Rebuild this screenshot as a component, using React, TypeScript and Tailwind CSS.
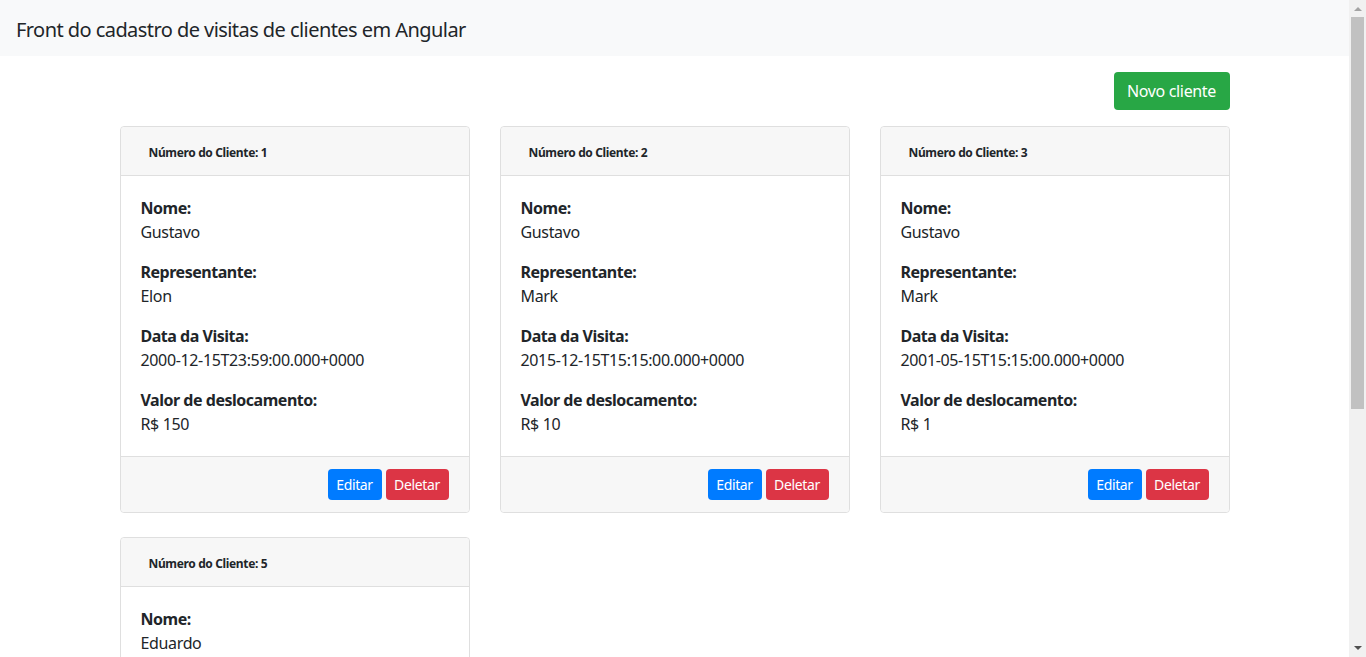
import React from 'react';

type Cliente = {
  id: number;
  nome: string;
  representante: string;
  data: string;
  valor: string;
};

const clientes: Cliente[] = [
  { id: 1, nome: 'Gustavo', representante: 'Elon', data: '2000-12-15T23:59:00.000+0000', valor: '150' },
  { id: 2, nome: 'Gustavo', representante: 'Mark', data: '2015-12-15T15:15:00.000+0000', valor: '10' },
  { id: 3, nome: 'Gustavo', representante: 'Mark', data: '2001-05-15T15:15:00.000+0000', valor: '1' },
  { id: 5, nome: 'Eduardo', representante: 'Elon', data: '2010-01-10T10:00:00.000+0000', valor: '50' },
];

const Field = ({ label, value }: { label: string; value: string }) => (
  <div>
    <div className="font-bold leading-6 tracking-[-0.03em]">{label}</div>
    <div className="leading-6">{value}</div>
  </div>
);

const ClienteCard = ({ c }: { c: Cliente }) => (
  <div className="w-[350px] rounded border border-[#dfdfdf] bg-white">
    <div className="h-[49px] flex items-center pt-[3px] px-7 bg-[#f7f7f7] border-b border-[#dfdfdf] rounded-t">
      <span className="text-[12px] font-bold text-[#212529] tracking-[-0.03em]">Número do Cliente: {c.id}</span>
    </div>
    <div className="p-5 flex flex-col gap-4">
      <Field label="Nome:" value={c.nome} />
      <Field label="Representante:" value={c.representante} />
      <Field label="Data da Visita:" value={c.data} />
      <Field label="Valor de deslocamento:" value={`R$ ${c.valor}`} />
    </div>
    <div className="h-[56px] flex items-center justify-end gap-1 px-5 bg-[#f7f7f7] border-t border-[#dfdfdf] rounded-b">
      <button className="h-[31px] w-[54px] rounded bg-[#007bff] text-white text-sm">Editar</button>
      <button className="h-[31px] w-[63px] rounded bg-[#dc3545] text-white text-sm">Deletar</button>
    </div>
  </div>
);

const Scrollbar = () => (
  <div className="w-[17px] h-full bg-[#f1f1f1] flex flex-col items-center shrink-0">
    <div className="h-[17px] flex items-center justify-center">
      <svg width="8" height="5" viewBox="0 0 8 5"><path d="M0 5 L4 1 L8 5 Z" fill="#a3a3a3" /></svg>
    </div>
    <div className="w-[13px] h-[392px] bg-[#c1c1c1]" />
    <div className="flex-1" />
    <div className="h-[17px] flex items-center justify-center">
      <svg width="8" height="5" viewBox="0 0 8 5"><path d="M0 0 L8 0 L4 4 Z" fill="#505050" /></svg>
    </div>
  </div>
);

export default function App() {
  return (
    <div
      className="flex h-[657px] w-[1366px] overflow-hidden text-base text-[#212529] bg-white tracking-[-0.022em]"
      style={{ fontFamily: '"Segoe UI", "Noto Sans", sans-serif' }}
    >
      <div className="flex-1 overflow-hidden">
        <nav className="h-14 bg-[#f8f9fa] flex items-center px-4 pt-[3px]">
          <span className="text-xl text-[#212529] tracking-[-0.028em]">Front do cadastro de visitas de clientes em Angular</span>
        </nav>
        <div className="w-[1110px] mx-auto">
          <div className="flex justify-end mt-4 mb-4">
            <button className="h-[38px] w-[116px] rounded bg-[#28a745] text-white text-base">Novo cliente</button>
          </div>
          <div className="grid grid-cols-3 gap-x-[30px] gap-y-6">
            {clientes.map((c) => (
              <ClienteCard key={c.id} c={c} />
            ))}
          </div>
        </div>
      </div>
      <Scrollbar />
    </div>
  );
}
